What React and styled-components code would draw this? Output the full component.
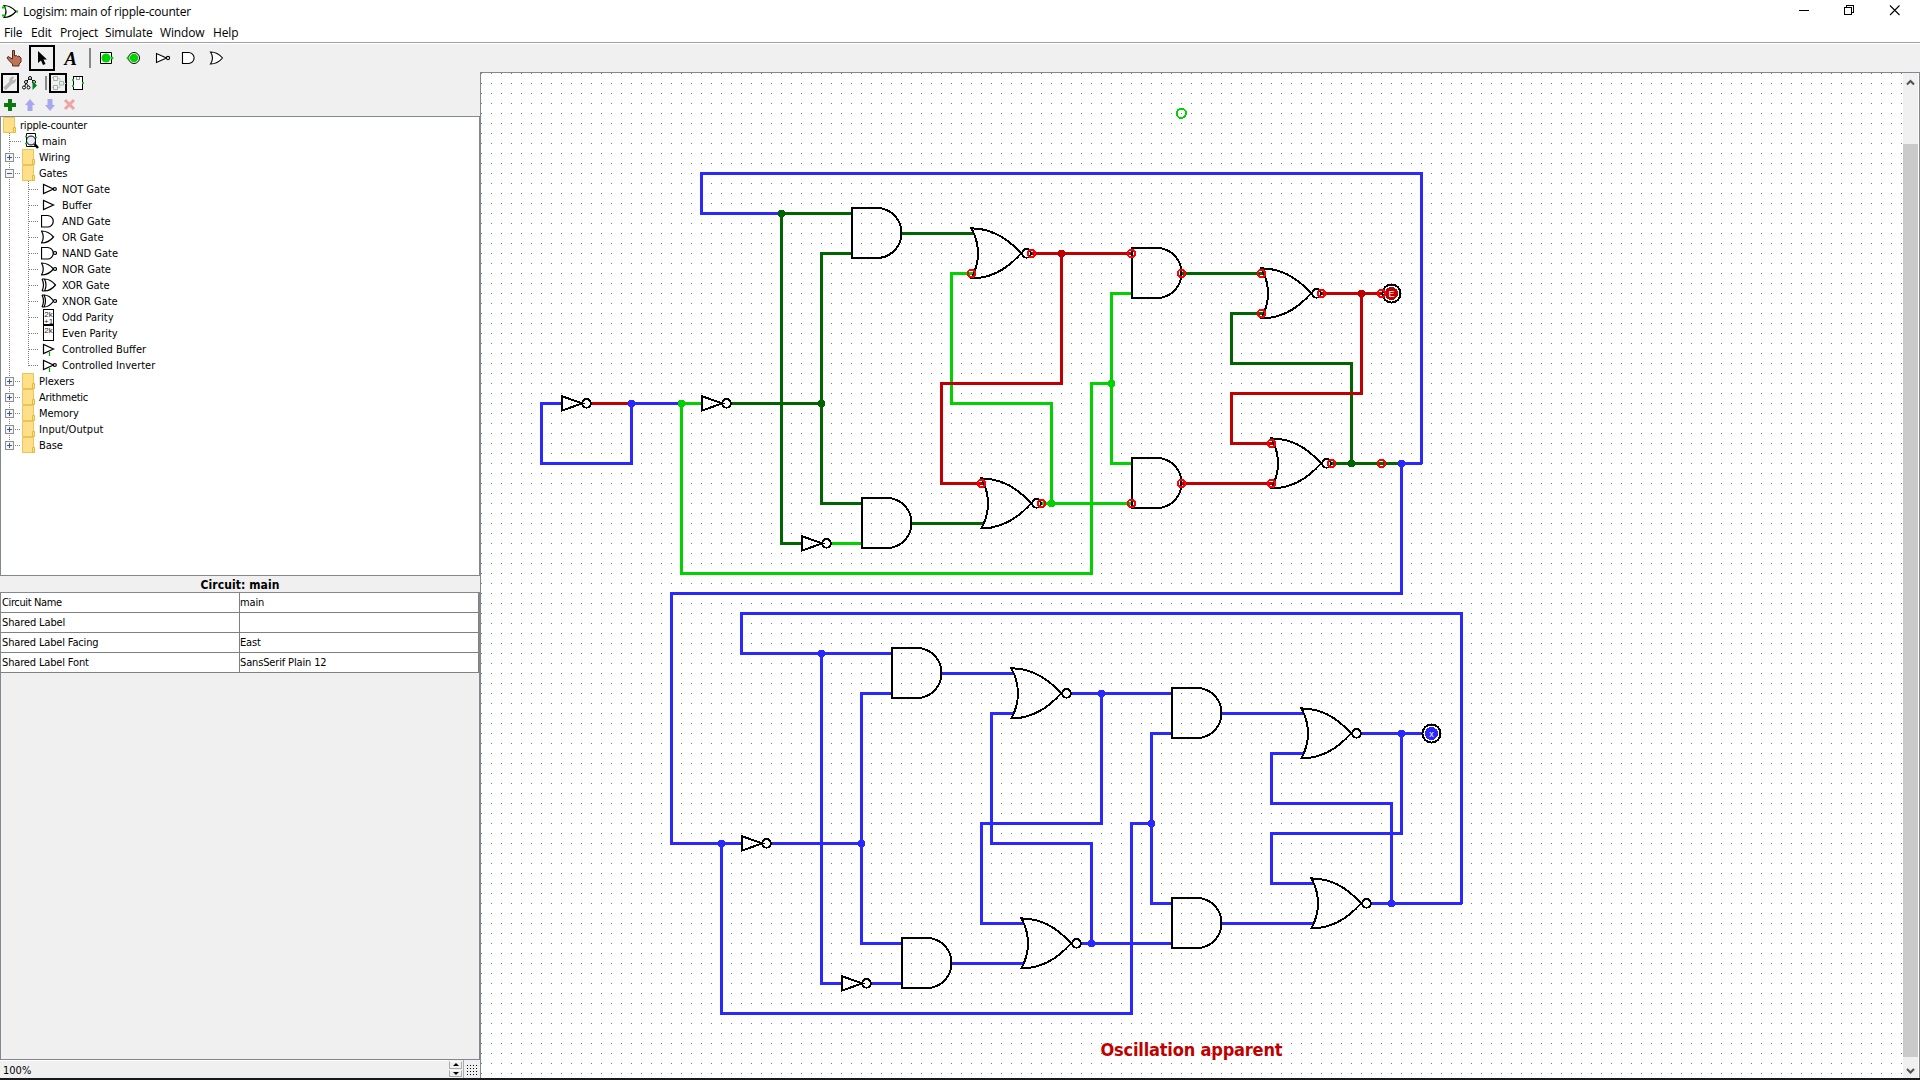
import React from "react";
import styled, { createGlobalStyle, css } from "styled-components";

const BLUE = "#2828ff";
const DARK = "#006400";
const LIGHT = "#00d200";
const RED = "#c00000";
const LINE = "#828790";
const UI = `"DejaVu Sans Condensed", "DejaVu Sans", sans-serif`;

const Global = createGlobalStyle`
  html, body { margin: 0; padding: 0; }
  body { width: 1920px; height: 1080px; overflow: hidden; background: #fff; }
  * { box-sizing: border-box; }
  svg { display: block; flex: none; }
`;

const Window = styled.div`
  width: 1920px;
  height: 1080px;
  display: flex;
  flex-direction: column;
  background: #f0f0f0;
  border-bottom: 2px solid #17181a;
  color: #000;
  font: 11px/16px ${UI};
`;
const TitleBar = styled.header`
  height: 24px;
  display: flex;
  align-items: flex-start;
  background: #fff;
  font: 12px/18px "Open Sans", "Noto Sans", sans-serif;
`;
const Title = styled.span`
  flex: 1;
  padding: 3px 0 0 4px;
  letter-spacing: -0.22px;
  white-space: nowrap;
`;
const MenuBar = styled.nav`
  height: 20px;
  display: flex;
  padding-left: 4px;
  background: #fff;
  border-bottom: 1px solid #fff;
  box-shadow: inset 0 -1px #a0a0a0;
  font: 12px/18px "Open Sans", "Noto Sans", sans-serif;
  letter-spacing: -0.15px;
`;
const MenuItem = styled.span`
  width: ${(p) => p.$w}px;
  white-space: nowrap;
`;
const Toolbar = styled.div`
  height: 28px;
  display: flex;
  gap: 2px;
  padding: 1px 0 0 1px;
`;
const Tool = styled.div`
  width: ${(p) => p.$w || 26}px;
  height: ${(p) => p.$h || 26}px;
  flex: none;
  display: flex;
  ${(p) => p.$on && css`box-shadow: inset 0 0 0 2px #000;`}
`;
const Separator = styled.div`
  width: 6px;
  height: ${(p) => p.$h}px;
  margin-top: ${(p) => p.$top}px;
  display: flex;
  justify-content: flex-end;
  &::after { content: ""; width: 2px; background: #888; }
`;
const Body = styled.div`
  flex: 1;
  min-height: 0;
  display: flex;
`;
const Side = styled.aside`
  width: 480px;
  display: flex;
  flex-direction: column;
`;
const SideTools = styled.div`
  height: 22px;
  display: flex;
  padding: 1px 0 0 1px;
`;
const EditTools = styled.div`
  height: 22px;
  display: flex;
  align-items: center;
  padding-left: 3px;
  gap: 6px;
`;
const Tree = styled.div`
  height: 460px;
  background: #fff;
  border: 1px solid ${LINE};
  display: flex;
  flex-direction: column;
`;
const TreeRow = styled.div`
  height: 16px;
  display: flex;
  flex: none;
  padding-left: ${(p) => p.$pad || 0}px;
`;
const TreeLabel = styled.span`
  padding-left: ${(p) => p.$gap}px;
  letter-spacing: ${(p) => p.$track ?? -0.1}px;
  line-height: 18px;
  white-space: nowrap;
`;
const Heading = styled.div`
  height: 16px;
  text-align: center;
  font: bold 12px/18px ${UI};
  letter-spacing: 0.08px;
`;
const TablePane = styled.div`
  flex: 1;
  border: 1px solid ${LINE};
`;
const TableRow = styled.div`
  height: 20px;
  display: grid;
  grid-template-columns: 239px 239px;
  background: #fff;
`;
const Cell = styled.div`
  border-right: 1px solid #808080;
  border-bottom: 1px solid #808080;
  padding: 1px 0 0 ${(p) => (p.$value ? 0 : 1)}px;
  line-height: 18px;
  letter-spacing: ${(p) => p.$track ?? -0.15}px;
  white-space: nowrap;
`;
const ZoomBar = styled.div`
  height: 18px;
  display: flex;
`;
const ZoomField = styled.div`
  width: 448px;
  padding-left: 3px;
  border-top: 1px solid #fff;
  line-height: 19px;
`;
const Spinner = styled.div`
  width: 16px;
  display: flex;
  flex-direction: column;
  gap: 1px;
  padding: 1px;
  border-right: 1px solid #aaa;
`;
const SpinButton = styled.div`
  flex: 1;
  background: #f0f0f0;
  border: 1px solid #aaa;
  border-top-color: #fff;
  display: flex;
  align-items: center;
  justify-content: center;
`;
const GridToggle = styled.div`
  flex: 1;
  padding: 5px 0 0 3px;
`;
const CanvasPane = styled.main`
  flex: 1;
  display: flex;
  background: #fff;
  border: 1px solid ${LINE};
  border-bottom: 0;
`;
const ScrollBar = styled.div`
  width: 16px;
  background: #f0f0f0;
  border-right: 1px solid #fff;
  display: flex;
  flex-direction: column;
`;
const Thumb = styled.div`
  flex: 1;
  background: #cacaca;
`;

const folder = (
  <>
    <path d="M.5 .5h11v15h-11z" fill="#ffe08a" stroke="#ecc455" />
    <path d="M10.5 10.5h2v5h-2z" fill="#ffe08a" stroke="#e5b93f" />
  </>
);
const GATE = {
  not: <><path d="M2.5 3.5v9l10-4.5z" /><circle cx="13.8" cy="8" r="1.5" /></>,
  buffer: <path d="M2.5 3.5v9l10-4.5z" />,
  and: <path d="M.5 2.5h6a5.7 5.7 0 0 1 0 11.5h-6z" />,
  or: <path d="M.5 2q3.5 6 0 12q7 0 12-6q-5-6-12-6z" />,
  nand: <><path d="M.5 2.5h6a5.7 5.7 0 0 1 0 11.5h-6z" /><circle cx="14" cy="8" r="1.5" /></>,
  nor: <><path d="M.5 2q3.5 6 0 12q7 0 12-6q-5-6-12-6z" /><circle cx="14" cy="8" r="1.5" /></>,
  xor: <path d="M1 2q3 6 0 12M3.5 2q3 6 0 12q6 0 11-6q-5-6-11-6zM1 2h3M1 14h3" />,
  xnor: <><path d="M1 2q3 6 0 12M3 2q3 6 0 12q5.5 0 9.5-6q-4-6-9.5-6zM1 2h3M1 14h3" /><circle cx="14" cy="8" r="1.5" /></>,
  cbuffer: <><path d="M2.5 3.5v9l10-4.5z" /><path d="M8.5 11v4" stroke="#00a000" /></>,
  cnot: <><path d="M2.5 3.5v9l10-4.5z" /><circle cx="13.8" cy="8" r="1.5" /><path d="M8.5 11v4" stroke="#00a000" /></>,
};

function GateIcon({ kind }) {
  if (kind === "odd" || kind === "even")
    return (
      <svg width="16" height="16" fontFamily="Liberation Sans, sans-serif" fontSize="8" fill="#222">
        <path d="M2.5 .5h10v15h-10z" fill="#fff" stroke="#000" shapeRendering="crispEdges" />
        <text x="3.3" y="7.5">2k</text>
        {kind === "odd" && <text x="3" y="14.5">+1</text>}
      </svg>
    );
  return (
    <svg width="16" height="16" fill="none" stroke="#000" strokeWidth="1.2">
      {GATE[kind]}
    </svg>
  );
}

function Dotted({ d }) {
  return <path d={d} stroke="#808080" strokeDasharray="1 1" fill="none" />;
}
function Expander({ open }) {
  return (
    <>
      <rect x="4.5" y="4.5" width="8" height="8" rx="1" fill="#f4f4f4" stroke="#8e8e8e" />
      <path d={open ? "M6 8.5h5" : "M6 8.5h5M8.5 6v5"} stroke="#3c5a96" />
    </>
  );
}

const GATES = [
  ["not", "NOT Gate"], ["buffer", "Buffer"], ["and", "AND Gate"], ["or", "OR Gate"],
  ["nand", "NAND Gate"], ["nor", "NOR Gate"], ["xor", "XOR Gate"], ["xnor", "XNOR Gate"],
  ["odd", "Odd Parity"], ["even", "Even Parity"], ["cbuffer", "Controlled Buffer"], ["cnot", "Controlled Inverter"],
];

function FolderRow({ name, open, last, track }) {
  return (
    <TreeRow>
      <svg width="21" height="16" shapeRendering="crispEdges">
        <Dotted d={last ? "M8.5 0v8" : "M8.5 0v16"} />
        <Dotted d="M14 8.5h5" />
        <Expander open={open} />
      </svg>
      <svg width="14" height="16">{folder}</svg>
      <TreeLabel $gap={3} $track={track}>{name}</TreeLabel>
    </TreeRow>
  );
}
function GateRow({ kind, name, last }) {
  return (
    <TreeRow>
      <svg width="40" height="16" shapeRendering="crispEdges">
        <Dotted d="M8.5 0v16" />
        <Dotted d={last ? "M27.5 0v9" : "M27.5 0v16"} />
        <Dotted d="M28 8.5h9" />
      </svg>
      <GateIcon kind={kind} />
      <TreeLabel $gap={5} $track={0}>{name}</TreeLabel>
    </TreeRow>
  );
}

/* Gates are anchored at their output, in canvas grid coordinates. */
const AndGate = ({ x, y }) => (
  <path d={`M${x - 24} ${y - 25}H${x - 49}V${y + 25}H${x - 24}A24.5 25 0 0 0 ${x - 24} ${y - 25}Z`} />
);
const NorGate = ({ x, y }) => (
  <>
    <path d={`M${x - 10} ${y + 0.4}q-22 -25 -49.5 -25q13 25 0 50q27.5 0 49.5 -25z`} />
    <circle cx={x - 4.5} cy={y + 0.4} r="4.3" />
  </>
);
const NotGate = ({ x, y }) => (
  <>
    <path d={`M${x - 29} ${y - 6.8}v14.4l20 -7.2z`} />
    <circle cx={x - 4.5} cy={y + 0.4} r="4.3" />
  </>
);

const WIRES = [
  [BLUE, "M1421 463V173H701V213H781"],
  [BLUE, "M561 403H541V463H631V403H681"],
  [RED, "M591 403H631"],
  [LIGHT, "M701 403H681V573H1091V383H1111M1131 293H1111V463H1131"],
  [DARK, "M781 213H852M781 213V543H801M731 403H821M852 253H821V503H861M901 233H973M911 523H983"],
  [LIGHT, "M831 543H861M973 273H951V403H1051V503M1041 503H1131"],
  [RED, "M1031 253H1131M1061 253V383H941V483H983"],
  [DARK, "M1181 273H1263M1263 313H1231V363H1351V463M1331 463H1401"],
  [RED, "M1321 293H1381M1361 293V393H1231V443H1273M1181 483H1273"],
  [BLUE, "M1401 463H1421M1401 463V593H671V843H741"],
  [BLUE, "M1461 903V613H741V653H892M821 653V983H841M721 843V1013H1131V823H1151M1171 733H1151V903H1171"],
  [BLUE, "M771 843H861M892 693H861V943H901M941 673H1013M951 963H1023M871 983H901"],
  [BLUE, "M1013 713H991V843H1091V943M1081 943H1171M1071 693H1171M1101 693V823H981V923H1023"],
  [BLUE, "M1221 713H1303M1303 753H1271V803H1391V903M1371 903H1461"],
  [BLUE, "M1361 733H1423M1401 733V833H1271V883H1313M1221 923H1313"],
];
const DOTS = [
  [DARK, 781, 213], [DARK, 821, 403], [BLUE, 631, 403], [LIGHT, 681, 403], [RED, 1061, 253],
  [LIGHT, 1051, 503], [LIGHT, 1111, 383], [RED, 1361, 293], [DARK, 1351, 463], [BLUE, 1401, 463],
  [BLUE, 721, 843], [BLUE, 821, 653], [BLUE, 861, 843], [BLUE, 1101, 693], [BLUE, 1091, 943],
  [BLUE, 1151, 823], [BLUE, 1401, 733], [BLUE, 1391, 903],
];
const ANDS = [[901, 233], [911, 523], [1181, 273], [1181, 483]];
const NORS = [[1031, 253], [1041, 503], [1321, 293], [1331, 463]];
const NOTS = [[591, 403], [731, 403], [831, 543], [771, 843], [871, 983]];
const RINGS = [
  [1031, 253], [971, 273], [1131, 253], [1181, 273], [1261, 273], [1261, 313], [1321, 293], [1381, 293],
  [1041, 503], [981, 483], [1131, 503], [1181, 483], [1271, 443], [1271, 483], [1331, 463], [1381, 463],
];
const both = (list) => [...list, ...list.map(([x, y]) => [x + 40, y + 440])];

function OutputPin({ x, y, color, children }) {
  return (
    <>
      <circle cx={x} cy={y} r="9" fill="#fff" stroke="#000" strokeWidth="2" />
      <circle cx={x} cy={y} r="6.5" fill={color} />
      <text x={x} y={y + 3.2} fill="#fff" fontSize="9" textAnchor="middle" fontFamily="Liberation Sans, sans-serif">
        {children}
      </text>
    </>
  );
}

function Circuit() {
  return (
    <svg width="1422" height="1005" viewBox="481 73 1422 1005" shapeRendering="crispEdges">
      <defs>
        <pattern id="grid" x="481" y="73" width="10" height="10" patternUnits="userSpaceOnUse">
          <rect width="1" height="1" fill="#777" />
        </pattern>
      </defs>
      <rect x="481" y="73" width="1422" height="1005" fill="url(#grid)" />
      <g transform="translate(.5 .5)" fill="none" strokeWidth="3">
        {WIRES.map(([c, d], i) => <path key={i} d={d} stroke={c} />)}
      </g>
      {DOTS.map(([c, x, y]) => <circle key={`${x}-${y}`} cx={x + 0.4} cy={y + 0.4} r="3.8" fill={c} />)}
      <g fill="none" stroke="#000" strokeWidth="2">
        {both(ANDS).map(([x, y]) => <AndGate key={`${x}-${y}`} x={x} y={y} />)}
        {both(NORS).map(([x, y]) => <NorGate key={`${x}-${y}`} x={x} y={y} />)}
        {NOTS.map(([x, y]) => <NotGate key={`${x}-${y}`} x={x} y={y} />)}
      </g>
      <OutputPin x={1391.5} y={293.5} color={RED}>E</OutputPin>
      <OutputPin x={1431.5} y={733.5} color={BLUE}>x</OutputPin>
      <g fill="none" stroke="#ff0000" strokeWidth="2">
        {RINGS.map(([x, y]) => <circle key={`${x}-${y}`} cx={x + 0.4} cy={y + 0.4} r="3.7" />)}
      </g>
      <circle cx="1181.3" cy="113.3" r="4.6" fill="none" stroke={LIGHT} strokeWidth="2" />
      <text x="1100.5" y="1056" textLength="182" fontFamily="DejaVu Sans Condensed, DejaVu Sans, sans-serif" fontWeight="bold" fontSize="18" fill={RED}>
        Oscillation apparent
      </text>
    </svg>
  );
}

const MENUS = [["File", 27], ["Edit", 29], ["Project", 45], ["Simulate", 55], ["Window", 53], ["Help", 40]];
const ATTRS = [
  ["Circuit Name", "main", -0.38],
  ["Shared Label", "", -0.12],
  ["Shared Label Facing", "East", -0.15],
  ["Shared Label Font", "SansSerif Plain 12", -0.15],
];

export default function App() {
  return (
    <Window>
      <Global />
      <TitleBar>
        <svg width="19" height="24" fill="none" stroke="#000" strokeWidth="1.2">
          <path d="M4 5.5q4 6 0 12q6.500 0 12-6q-5.500-6-12-6z" fill="#fff" />
          <path d="M2 7.5h4M2 15.5h4M16 11.5h2" stroke="#00c000" strokeWidth="2" />
        </svg>
        <Title>Logisim: main of ripple-counter</Title>
        <svg width="121" height="24" fill="none" stroke="#000">
          <path d="M0 10.5h10M45.5 7.5h7v7h-7zM47.5 7.5v-2h7v7h-2" shapeRendering="crispEdges" />
          <path d="M91 5.5l9.5 9.5M100.5 5.5l-9.5 9.5" strokeWidth="1.1" />
        </svg>
      </TitleBar>
      <MenuBar>
        {MENUS.map(([m, w]) => <MenuItem key={m} $w={w}>{m}</MenuItem>)}
      </MenuBar>
      <Toolbar>
        <Tool>
          <svg width="26" height="26"><path d="M11.5 5.5h2v5.500l2-.5 1 1 1.500-.5 2 2v4l-2 2v2h-6.500v-2l-3-3-2.500-3 1-1.500 4.500 2.500z" fill="#c0735a" stroke="#5a2a1c" /></svg>
        </Tool>
        <Tool $on>
          <svg width="26" height="26"><path d="M9 6v12l3-2.500 2 4.500 2.500-1-2-4.500h3.500z" /></svg>
        </Tool>
        <Tool>
          <svg width="26" height="26"><text x="7.5" y="19.500" fontFamily="Liberation Serif, serif" fontWeight="bold" fontStyle="italic" fontSize="18.500">A</text></svg>
        </Tool>
        <Separator $h={20} $top={3} />
        <Tool>
          <svg width="26" height="26"><path d="M7.500 7.500h11v11h-11z" fill="#fff" stroke="#000" /><circle cx="13" cy="13" r="4.500" fill={LIGHT} /><circle cx="19" cy="13" r="1.500" fill={LIGHT} /></svg>
        </Tool>
        <Tool>
          <svg width="26" height="26"><circle cx="13" cy="13" r="5.500" fill="#fff" stroke="#000" /><circle cx="13" cy="13" r="4.200" fill={LIGHT} /><circle cx="7" cy="13" r="1.500" fill={LIGHT} /></svg>
        </Tool>
        <Tool>
          <svg width="26" height="26" fill="#fff" stroke="#000" strokeWidth="1.100"><path d="M7.500 8.500v9l10-4.500z" /><circle cx="19" cy="13" r="1.600" /></svg>
        </Tool>
        <Tool>
          <svg width="26" height="26" fill="#fff" stroke="#000" strokeWidth="1.100"><path d="M5.500 7.500h6a5.600 5.500 0 0 1 0 11h-6z" /></svg>
        </Tool>
        <Tool>
          <svg width="26" height="26" fill="#fff" stroke="#000" strokeWidth="1.100"><path d="M5.500 7q4 6 0 12q7 0 12-6q-5-6-12-6z" /></svg>
        </Tool>
      </Toolbar>
      <Body>
        <Side>
          <SideTools>
            <Tool $w={18} $h={20} $on>
              <svg width="18" height="20" fill="none" stroke="#b4b4b4"><path d="M3.500 16l6.500-6.500" strokeWidth="3.500" /><path d="M14.500 6.500l-2 1.500-1.500-1.500 1.500-2.500c-4 0-4.500 3.500-3 5.500 2 1.500 5 .5 5-3z" fill="#b4b4b4" /></svg>
            </Tool>
            <Tool $w={22} $h={20}>
              <svg width="22" height="20" fill="#fff" stroke="#000"><path d="M7 9l4-4 4 4M5 15l2-5 3 4" fill="none" /><circle cx="11" cy="5" r="1.500" /><circle cx="7" cy="9" r="1.500" /><circle cx="15" cy="9" r="1.500" /><circle cx="5" cy="14.500" r="1.500" /><circle cx="9.500" cy="14.500" r="1.500" /><path d="M13.500 8v9l4.500-4.500z" fill="#00821e" stroke="none" /></svg>
            </Tool>
            <Separator $h={14} $top={3} />
            <Tool $w={2} $h={20} />
            <Tool $w={18} $h={20} $on>
              <svg width="18" height="20" fill="none" stroke="#aaa"><path d="M4.500 3.500h4v4h-4zM4.500 12.500h4v4h-4zM10.500 8.500h4v3.500h-4z" /><path d="M3 4.500h1M3 14.500h1M9 5.500h2v3M9 14.500h2v-3M15 10.500h2" stroke="#a4e0a4" /></svg>
            </Tool>
            <Tool $w={22} $h={20}>
              <svg width="22" height="20" fill="none" stroke="#000" shapeRendering="crispEdges"><path d="M6.500 3.500h9v13h-9z" fill="#fff" /><path d="M9.500 4v2h3v-2" stroke="#999" /><path d="M5 7h2M5 13h2M15 10h2" stroke={LIGHT} strokeWidth="2" /></svg>
            </Tool>
          </SideTools>
          <EditTools>
            <svg width="14" height="14"><path d="M5 1h4v4h4v4h-4v4h-4v-4h-4v-4h4z" fill="#087a10" /></svg>
            <svg width="14" height="14"><path d="M7 1l5 6h-2.500v6h-5v-6h-2.500z" fill="#a8a8ee" /></svg>
            <svg width="14" height="14"><path d="M7 13l5-6h-2.500v-6h-5v6h-2.500z" fill="#a8a8ee" /></svg>
            <svg width="14" height="14"><path d="M2 2l9 9M11 2l-9 9" stroke="#efa3a3" strokeWidth="3" /></svg>
          </EditTools>
          <Tree>
            <TreeRow $pad={2}>
              <svg width="14" height="16">{folder}</svg>
              <TreeLabel $gap={3} $track={-0.2}>ripple-counter</TreeLabel>
            </TreeRow>
            <TreeRow>
              <svg width="23" height="16" shapeRendering="crispEdges"><Dotted d="M8.5 0v16" /><Dotted d="M9 8.5h11" /></svg>
              <svg width="16" height="16" fill="none" stroke="#000">
                <path d="M2.5 .5h9v13h-9z" fill="#fff" />
                <circle cx="7" cy="7.5" r="4.5" fill="#eaeaff" />
                <path d="M10.5 11l3.5 4" strokeWidth="2.5" />
                <path d="M1 3.5h2M1 10.5h2M11 4.5h2" stroke={LIGHT} strokeWidth="1.5" />
              </svg>
              <TreeLabel $gap={2}>main</TreeLabel>
            </TreeRow>
            <FolderRow name="Wiring" />
            <FolderRow name="Gates" open />
            {GATES.map(([k, n], i) => <GateRow key={k} kind={k} name={n} last={i === GATES.length - 1} />)}
            <FolderRow name="Plexers" track={0} />
            <FolderRow name="Arithmetic" track={-0.25} />
            <FolderRow name="Memory" />
            <FolderRow name="Input/Output" track={0.1} />
            <FolderRow name="Base" last />
          </Tree>
          <Heading>Circuit: main</Heading>
          <TablePane>
            {ATTRS.map(([k, v, track]) => (
              <TableRow key={k}><Cell $track={track}>{k}</Cell><Cell $value>{v}</Cell></TableRow>
            ))}
          </TablePane>
          <ZoomBar>
            <ZoomField>100%</ZoomField>
            <Spinner>
              <SpinButton><svg width="6" height="3"><path d="M3 0l3 3h-6z" /></svg></SpinButton>
              <SpinButton><svg width="6" height="3"><path d="M3 3l3-3h-6z" /></svg></SpinButton>
            </Spinner>
            <GridToggle>
              <svg width="10" height="10" shapeRendering="crispEdges" stroke="#000" strokeDasharray="1 2">
                {[0, 3, 6, 9].map((y) => <path key={y} d={`M0 ${y + 0.5}h10`} />)}
              </svg>
            </GridToggle>
          </ZoomBar>
        </Side>
        <CanvasPane>
          <Circuit />
          <ScrollBar>
            <svg width="15" height="71" fill="none" stroke="#505050" strokeWidth="2"><path d="M4 11.500l3.500-3.500 3.500 3.500" /></svg>
            <Thumb />
            <svg width="15" height="21" fill="none" stroke="#505050" strokeWidth="2"><path d="M4 12l3.500 3.500 3.500-3.500" /></svg>
          </ScrollBar>
        </CanvasPane>
      </Body>
    </Window>
  );
}
